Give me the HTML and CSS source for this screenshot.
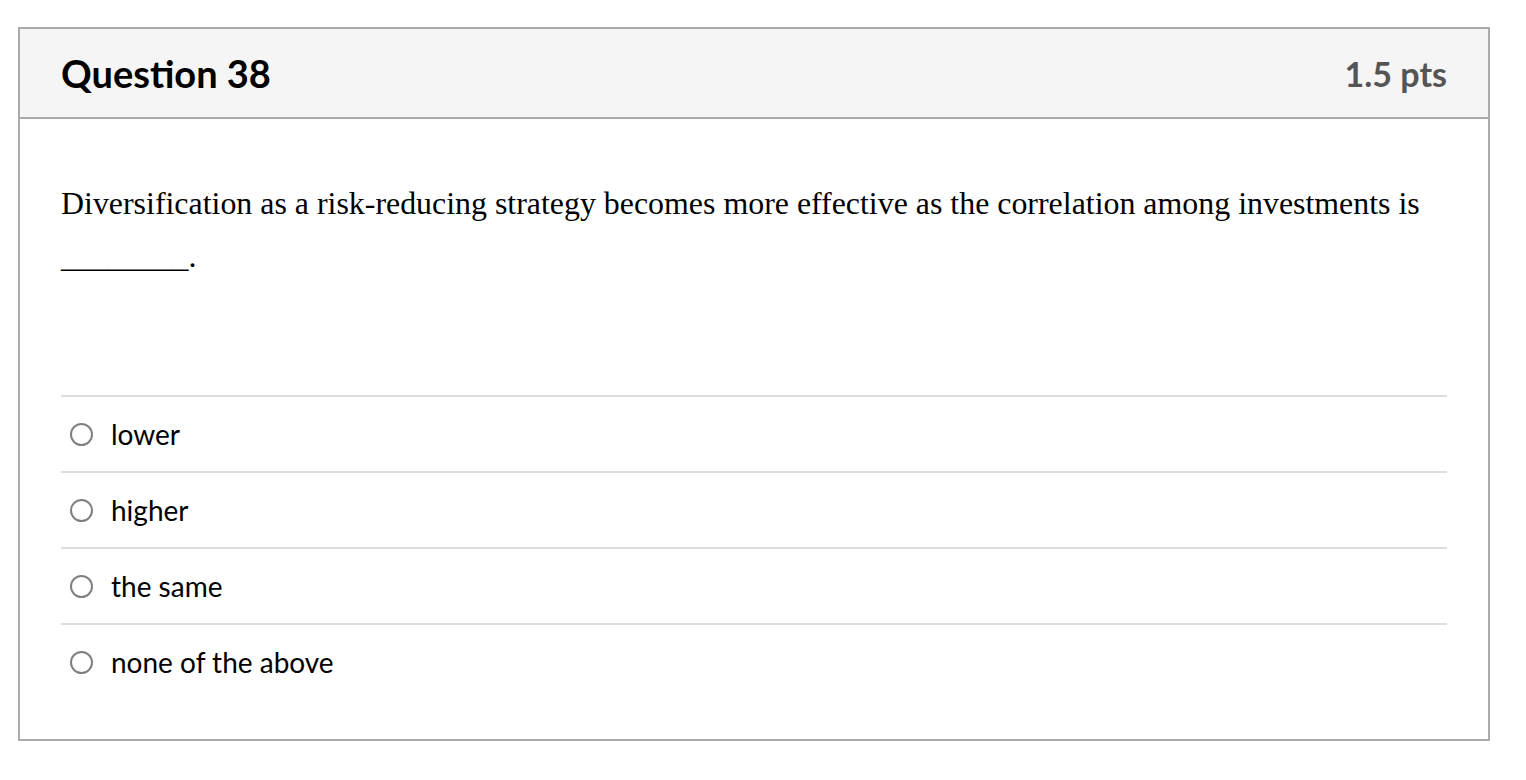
FILE: index.html
```html
<!DOCTYPE html>
<html>
<head>
<meta charset="utf-8">
<link rel="stylesheet" href="styles.css">
</head>
<body>
<div class="question">
  <div class="header">
    <span class="title">Question 38</span>
    <span class="pts">1.5 pts</span>
  </div>
  <div class="content">
    <p class="text">Diversification as a risk-reducing strategy becomes more effective as the correlation among investments is ________.</p>
    <div class="answers">
      <label class="answer"><span class="radio"></span><span class="label">lower</span></label>
      <label class="answer"><span class="radio"></span><span class="label">higher</span></label>
      <label class="answer"><span class="radio"></span><span class="label">the same</span></label>
      <label class="answer"><span class="radio"></span><span class="label">none of the above</span></label>
    </div>
  </div>
</div>
</body>
</html>
```

FILE: styles.css
```css
html, body {
  margin: 0;
  padding: 0;
  background: #ffffff;
}
body {
  padding: 27px 36px 0 18px;
}
.question {
  border: 2px solid #aaaaaa;
  background: #ffffff;
  font-family: Lato, "Liberation Sans", sans-serif;
  color: #000;
}
.header {
  display: flex;
  justify-content: space-between;
  align-items: center;
  height: 88px;
  padding: 0 41px;
  background: #f5f5f5;
  border-bottom: 2px solid #aaaaaa;
}
.title {
  font-weight: 700;
  font-size: 38px;
  color: #000;
}
.pts {
  font-weight: 700;
  font-size: 34px;
  color: #555555;
}
.content {
  padding: 0 41px 40px;
}
.text {
  font-family: "Liberation Serif", "Times New Roman", serif;
  font-size: 31.9px;
  line-height: 53px;
  margin: 58px 0 112px;
}
.answers {
  display: flex;
  flex-direction: column;
}
.answer {
  display: flex;
  align-items: center;
  height: 74px;
  border-top: 2px solid #dddddd;
  gap: 18px;
  padding-left: 9px;
}
.radio {
  box-sizing: border-box;
  width: 23px;
  height: 23px;
  border: 2px solid #808080;
  border-radius: 50%;
  flex: none;
}
.label {
  font-size: 28px;
}
```
